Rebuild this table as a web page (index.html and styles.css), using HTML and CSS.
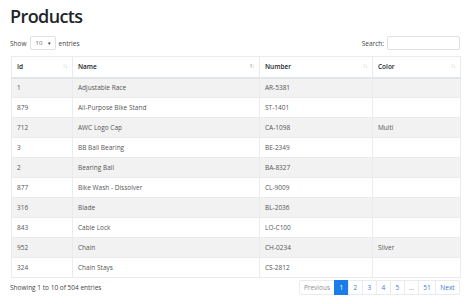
FILE: index.html
```html
<!doctype html>
<html lang="en">
  <head>
    <meta charset="UTF-8" />
    <title>Products</title>
    <link rel="stylesheet" href="styles.css">
  </head>
  <body>
    <h1>Products</h1>

    <div class="toolbar">
      <label class="length">Show <span class="select">10 <span class="caret">&#9662;</span></span> entries</label>
      <label class="search">Search: <span class="input"></span></label>
    </div>

    <table class="grid">
      <colgroup>
        <col class="c-id"><col class="c-name"><col class="c-number"><col class="c-color">
      </colgroup>
      <thead>
        <tr>
          <th>Id<span class="sort"><i>↑</i><i>↓</i></span></th>
          <th>Name<span class="sort asc"><i>↑</i><i>↓</i></span></th>
          <th>Number<span class="sort"><i>↑</i><i>↓</i></span></th>
          <th>Color<span class="sort"><i>↑</i><i>↓</i></span></th>
        </tr>
      </thead>
      <tbody>
        <tr><td>1</td><td>Adjustable Race</td><td>AR-5381</td><td></td></tr>
        <tr><td>879</td><td>All-Purpose Bike Stand</td><td>ST-1401</td><td></td></tr>
        <tr><td>712</td><td>AWC Logo Cap</td><td>CA-1098</td><td>Multi</td></tr>
        <tr><td>3</td><td>BB Ball Bearing</td><td>BE-2349</td><td></td></tr>
        <tr><td>2</td><td>Bearing Ball</td><td>BA-8327</td><td></td></tr>
        <tr><td>877</td><td>Bike Wash - Dissolver</td><td>CL-9009</td><td></td></tr>
        <tr><td>316</td><td>Blade</td><td>BL-2036</td><td></td></tr>
        <tr><td>843</td><td>Cable Lock</td><td>LO-C100</td><td></td></tr>
        <tr><td>952</td><td>Chain</td><td>CH-0234</td><td>Silver</td></tr>
        <tr><td>324</td><td>Chain Stays</td><td>CS-2812</td><td></td></tr>
      </tbody>
    </table>

    <div class="footer">
      <div class="info">Showing 1 to 10 of 504 entries</div>
      <ul class="pager">
        <li class="muted">Previous</li>
        <li class="active">1</li>
        <li>2</li>
        <li>3</li>
        <li>4</li>
        <li>5</li>
        <li class="muted">…</li>
        <li>51</li>
        <li>Next</li>
      </ul>
    </div>
  </body>
</html>
```

FILE: styles.css
```css
* {
  margin: 0;
  padding: 0;
  box-sizing: border-box;
}

body {
  font-family: 'Open Sans', 'Noto Sans', sans-serif;
  color: #212529;
  background: #fff;
  padding: 5px 14px 0 10px;
  font-size: 6.5px;
}

h1 {
  font-size: 18px;
  font-weight: 550;
  line-height: 22px;
  height: 31px;
  letter-spacing: -0.6px;
}

.toolbar {
  display: flex;
  justify-content: space-between;
  align-items: center;
  height: 14px;
  margin-bottom: 6px;
  color: #444;
}

.length,
.search {
  display: flex;
  align-items: center;
  gap: 3px;
}

.select {
  display: inline-flex;
  align-items: center;
  justify-content: space-between;
  width: 26px;
  height: 14px;
  padding: 0 4px 0 5px;
  border: 1px solid #dee2e6;
  border-radius: 2px;
  font-size: 6px;
  color: #666;
}

.caret {
  font-size: 5px;
  color: #333;
}

.input {
  display: block;
  width: 73px;
  height: 14px;
  border: 1px solid #dee2e6;
  border-radius: 2px;
}

.grid {
  width: 449px;
  margin-left: 1px;
  border-collapse: collapse;
  table-layout: fixed;
}

.c-id { width: 61px; }
.c-name { width: 187px; }
.c-number { width: 113px; }
.c-color { width: 88px; }

.grid th,
.grid td {
  border: 1px solid #e9ecef;
  text-align: left;
  padding: 0 5px;
  white-space: nowrap;
}

.grid th {
  height: 21px;
  font-weight: 600;
  position: relative;
  color: #212529;
  border-bottom-width: 2px;
  border-bottom-color: #e3e6e9;
}

.grid td {
  height: 20px;
  color: #555;
}

.grid tbody tr:nth-child(odd) td {
  background: #f2f2f2;
}

.sort {
  position: absolute;
  right: 5px;
  top: 4px;
  font-size: 6.5px;
  color: #ccc;
  letter-spacing: -1px;
}

.sort i {
  font-style: normal;
}

.sort.asc i:first-child {
  color: #555;
}

.footer {
  display: flex;
  justify-content: space-between;
  align-items: center;
  margin-top: 2px;
}

.info {
  color: #444;
}

.pager {
  list-style: none;
  display: flex;
  height: 15px;
}

.pager li {
  display: flex;
  align-items: center;
  justify-content: center;
  min-width: 15px;
  padding: 0 4px;
  border: 1px solid #e9ecef;
  margin-left: -1px;
  color: #3a7bd5;
}

.pager li:first-child {
  width: 36px;
  border-radius: 2px 0 0 2px;
}

.pager li:last-child {
  width: 25px;
  border-radius: 0 2px 2px 0;
}

.pager li:nth-child(8) {
  width: 18px;
}

.pager .muted {
  color: #8a8f94;
}

.pager .active {
  background: #1a7ce8;
  border-color: #1a7ce8;
  color: #fff;
}
```
